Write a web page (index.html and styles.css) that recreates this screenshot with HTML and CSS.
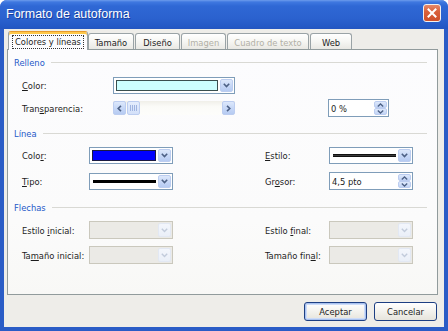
FILE: index.html
```html
<!DOCTYPE html>
<html lang="es">
<head>
<meta charset="utf-8">
<title>Formato de autoforma</title>
<link rel="stylesheet" href="styles.css">
</head>
<body>
<div class="window">
  <div class="titlebar">
    <span class="title">Formato de autoforma</span>
    <span class="close"><svg width="10" height="10" viewBox="0 0 10 10"><path d="M1.5 1.5 L8.5 8.5 M8.5 1.5 L1.5 8.5" stroke="#fff" stroke-width="2" stroke-linecap="square"/></svg></span>
  </div>
  <div class="client">
    <div class="tabs">
      <div class="tab active w-col"><span class="focus">Colores y líneas</span></div>
      <div class="tab w-tam">Tamaño</div>
      <div class="tab w-dis gap">Diseño</div>
      <div class="tab w-ima gap disabled">Imagen</div>
      <div class="tab w-cua gap disabled">Cuadro de texto</div>
      <div class="tab w-web gap">Web</div>
    </div>
    <div class="panel">
      <section class="group">
        <div class="group-head"><span>Relleno</span><i class="rule"></i></div>
        <div class="row fill-grid r1">
          <span class="lbl"><u>C</u>olor:</span>
          <div class="combo"><span class="field"><span class="swatch cyan"></span></span><span class="drop"><svg width="7" height="5" viewBox="0 0 7 5"><path d="M0.8 0.8 L3.5 3.5 L6.2 0.8" fill="none" stroke="#4d6185" stroke-width="1.6"/></svg></span></div>
        </div>
        <div class="row fill-grid r2">
          <span class="lbl">Tran<u>s</u>parencia:</span>
          <div class="scroll">
            <span class="sbtn"><svg width="5" height="7" viewBox="0 0 5 7"><path d="M4 0.8 L1.2 3.5 L4 6.2" fill="none" stroke="#4d6185" stroke-width="1.6"/></svg></span>
            <span class="thumb"><i></i><i></i><i></i><i></i></span>
            <span class="track"></span>
            <span class="sbtn"><svg width="5" height="7" viewBox="0 0 5 7"><path d="M1 0.8 L3.8 3.5 L1 6.2" fill="none" stroke="#4d6185" stroke-width="1.6"/></svg></span>
          </div>
          <span></span>
          <div class="spin"><span class="field text">0 %</span><span class="spin-btns"><span class="sb"><svg width="7" height="4" viewBox="0 0 7 4"><path d="M0.8 3.4 L3.5 0.9 L6.2 3.4" fill="none" stroke="#4d6185" stroke-width="1.3"/></svg></span><span class="sb"><svg width="7" height="4" viewBox="0 0 7 4"><path d="M0.8 0.6 L3.5 3.1 L6.2 0.6" fill="none" stroke="#4d6185" stroke-width="1.3"/></svg></span></span></div>
        </div>
      </section>

      <section class="group g2">
        <div class="group-head"><span>Línea</span><i class="rule"></i></div>
        <div class="row line-grid r3">
          <span class="lbl">Colo<u>r</u>:</span>
          <div class="combo"><span class="field"><span class="swatch blue"></span></span><span class="drop"><svg width="7" height="5" viewBox="0 0 7 5"><path d="M0.8 0.8 L3.5 3.5 L6.2 0.8" fill="none" stroke="#4d6185" stroke-width="1.6"/></svg></span></div>
          <span></span>
          <span class="lbl-r"><u>E</u>stilo:</span>
          <div class="combo"><span class="field"><span class="stroke style"></span></span><span class="drop"><svg width="7" height="5" viewBox="0 0 7 5"><path d="M0.8 0.8 L3.5 3.5 L6.2 0.8" fill="none" stroke="#4d6185" stroke-width="1.6"/></svg></span></div>
        </div>
        <div class="row line-grid r4">
          <span class="lbl"><u>T</u>ipo:</span>
          <div class="combo"><span class="field"><span class="stroke solid"></span></span><span class="drop"><svg width="7" height="5" viewBox="0 0 7 5"><path d="M0.8 0.8 L3.5 3.5 L6.2 0.8" fill="none" stroke="#4d6185" stroke-width="1.6"/></svg></span></div>
          <span></span>
          <span class="lbl-r">Gr<u>o</u>sor:</span>
          <div class="spin"><span class="field text">4,5 pto</span><span class="spin-btns"><span class="sb"><svg width="7" height="4" viewBox="0 0 7 4"><path d="M0.8 3.4 L3.5 0.9 L6.2 3.4" fill="none" stroke="#4d6185" stroke-width="1.3"/></svg></span><span class="sb"><svg width="7" height="4" viewBox="0 0 7 4"><path d="M0.8 0.6 L3.5 3.1 L6.2 0.6" fill="none" stroke="#4d6185" stroke-width="1.3"/></svg></span></span></div>
        </div>
      </section>

      <section class="group g3">
        <div class="group-head"><span>Flechas</span><i class="rule"></i></div>
        <div class="row line-grid r5">
          <span class="lbl">Estilo <u>i</u>nicial:</span>
          <div class="combo off"><span class="field"></span><span class="drop"><svg width="7" height="5" viewBox="0 0 7 5"><path d="M0.8 0.8 L3.5 3.5 L6.2 0.8" fill="none" stroke="#c2cbdb" stroke-width="1.4"/></svg></span></div>
          <span></span>
          <span class="lbl-r">Estilo <u>f</u>inal:</span>
          <div class="combo off"><span class="field"></span><span class="drop"><svg width="7" height="5" viewBox="0 0 7 5"><path d="M0.8 0.8 L3.5 3.5 L6.2 0.8" fill="none" stroke="#c2cbdb" stroke-width="1.4"/></svg></span></div>
        </div>
        <div class="row line-grid r6">
          <span class="lbl">Ta<u>m</u>año inicial:</span>
          <div class="combo off"><span class="field"></span><span class="drop"><svg width="7" height="5" viewBox="0 0 7 5"><path d="M0.8 0.8 L3.5 3.5 L6.2 0.8" fill="none" stroke="#c2cbdb" stroke-width="1.4"/></svg></span></div>
          <span></span>
          <span class="lbl-r">Tamaño fin<u>a</u>l:</span>
          <div class="combo off"><span class="field"></span><span class="drop"><svg width="7" height="5" viewBox="0 0 7 5"><path d="M0.8 0.8 L3.5 3.5 L6.2 0.8" fill="none" stroke="#c2cbdb" stroke-width="1.4"/></svg></span></div>
        </div>
      </section>
    </div>
    <div class="footer">
      <button class="btn default">Aceptar</button>
      <button class="btn">Cancelar</button>
    </div>
  </div>
</div>
</body>
</html>
```

FILE: styles.css
```css
* { box-sizing: border-box; }
html, body { margin: 0; padding: 0; }
body {
  width: 448px;
  height: 331px;
  overflow: hidden;
  background: #ffffff;
  font-family: "DejaVu Sans Condensed", "DejaVu Sans", sans-serif;
  font-stretch: condensed;
  font-size: 9.3px;
  color: #1c1c1c;
}
u { text-decoration: underline; text-underline-offset: 1px; }

.window {
  width: 448px;
  height: 331px;
  display: flex;
  flex-direction: column;
  background: #2a5cc6;
  border-radius: 7px 7px 0 0;
  overflow: hidden;
}

.titlebar {
  flex: none;
  height: 29px;
  display: flex;
  justify-content: space-between;
  align-items: flex-start;
  padding: 0 7px 0 6px;
  background: linear-gradient(to bottom, #6d9cec 0, #3f78e0 2px, #2f68d5 6px, #2b62cf 18px, #2459c6 26px, #2355c0 29px);
}
.title {
  margin-top: 7px;
  color: #fff;
  font-family: "Liberation Sans", sans-serif;
  font-stretch: normal;
  font-size: 12.5px;
  line-height: 15px;
  text-shadow: 1px 1px 0 #1a3f9e;
}
.close {
  margin-top: 4px;
  width: 18px;
  height: 18px;
  border: 1px solid #f4f0ee;
  border-radius: 3px;
  background: linear-gradient(to bottom, #e6896a 0, #d9613c 40%, #cd4f2a 100%);
  display: flex;
  align-items: center;
  justify-content: center;
}

.client {
  flex: 1;
  margin: 0 4px 4px;
  background: #eeede9;
  padding: 2px 6px 0 3px;
  display: flex;
  flex-direction: column;
}

.tabs {
  position: relative;
  z-index: 1;
  flex: none;
  display: flex;
  align-items: flex-end;
  height: 19px;
  margin-bottom: -1px;
  padding-left: 1px;
}
.tab {
  flex: none;
  height: 16px;
  margin-bottom: 1px;
  border: 1px solid #9aa3a6;
  border-bottom: 0;
  border-radius: 3px 3px 0 0;
  background: linear-gradient(to bottom, #ffffff 0, #f6f6f3 50%, #e9e8e3 100%);
  display: flex;
  align-items: center;
  justify-content: center;
  white-space: nowrap;
  padding-top: 1px;
}
.tab.gap { margin-left: 1px; }
.tab.disabled { color: #b2b0a6; }
.tab.active {
  height: 19px;
  margin-bottom: 0;
  border-top: 1px solid #e79a2e;
  box-shadow: inset 0 2px 0 #fec84a;
  background: #fcfcfe;
  padding-top: 1px;
}
.focus {
  border: 1px dotted #333;
  padding: 1px 2px 1px 2px;
  line-height: 10px;
}
.w-col { width: 80px; }
.w-tam { width: 46px; }
.w-dis { width: 45px; }
.w-ima { width: 45px; }
.w-cua { width: 82px; }
.w-web { width: 42px; }

.panel {
  flex: none;
  height: 246px;
  border: 1px solid #919b9c;
  background: linear-gradient(to bottom, #fcfcfe 0, #fbfbfb 70%, #f8f8f6 100%);
  padding: 5px 10px 0 6px;
}

.group-head {
  height: 14px;
  display: flex;
  align-items: center;
  gap: 6px;
  color: #2558c8;
}
.rule {
  flex: 1;
  height: 1px;
  background: #d9d9d4;
}
.g2 { margin-top: 10px; }
.g3 { margin-top: 11px; }

.row {
  display: grid;
  align-items: center;
  height: 17px;
}
.fill-grid { grid-template-columns: 99px 122px 93px 61px; }
.line-grid { grid-template-columns: 75px 84px 92px 64px 84px; }
.r1 { margin-top: 8px; }
.r2 { margin-top: 5px; }
.r3 { margin-top: 7px; }
.r4 { margin-top: 8px; }
.r5 { margin-top: 7px; }
.r6 { margin-top: 8px; }

.lbl { padding-left: 8px; white-space: nowrap; }
.lbl-r { white-space: nowrap; }

.combo {
  height: 17px;
  display: flex;
  border: 1px solid #7f9db9;
  background: #fff;
  padding: 1px;
}
.combo .field {
  flex: 1;
  display: flex;
  align-items: center;
  padding: 1px 2px 1px 1px;
}
.drop {
  flex: none;
  width: 13px;
  border: 1px solid #bccdf0;
  border-radius: 2px;
  background: linear-gradient(to bottom, #dde8fb 0, #c7d8f7 50%, #b6cbf2 100%);
  display: flex;
  align-items: center;
  justify-content: center;
}
.swatch {
  flex: 1;
  align-self: stretch;
  border: 1px solid #3a4f4f;
}
.swatch.cyan { background: #ccffff; }
.swatch.blue { background: #0000ff; border-color: #1a1a40; }
.stroke { flex: 1; margin-left: 1px; }
.stroke.solid { height: 3px; background: #000; }
.stroke.style { height: 3px; background: #3a3a3a; border-top: 1px solid #111; border-bottom: 1px solid #111; }

.combo.off {
  height: 18px;
  border-color: #cac8bd;
  background: #ebeae6;
}
.combo.off .drop {
  border-color: #e2e8f3;
  background: linear-gradient(to bottom, #f3f6fc 0, #eaeff8 100%);
}

.scroll {
  height: 14px;
  display: flex;
  background: linear-gradient(to bottom, #f0efe9 0, #fbfbf8 40%, #fdfdfb 100%);
}
.sbtn {
  flex: none;
  width: 13px;
  border: 1px solid #bccdf0;
  border-radius: 2px;
  background: linear-gradient(to bottom, #dde8fb 0, #c7d8f7 50%, #b6cbf2 100%);
  display: flex;
  align-items: center;
  justify-content: center;
}
.thumb {
  flex: none;
  width: 13px;
  margin-left: 1px;
  border: 1px solid #bccdf0;
  border-radius: 2px;
  background: linear-gradient(to bottom, #e4edfc 0, #d3e0f9 100%);
  display: flex;
  align-items: center;
  justify-content: center;
  gap: 1px;
}
.thumb i {
  width: 1px;
  height: 6px;
  background: #9fb4e0;
}
.track { flex: 1; }

.spin {
  height: 18px;
  display: flex;
  border: 1px solid #7f9db9;
  background: #fff;
  padding: 1px;
}
.spin .field {
  flex: 1;
  display: flex;
  align-items: center;
  padding-left: 1px;
}
.spin-btns {
  flex: none;
  width: 13px;
  display: flex;
  flex-direction: column;
  gap: 0;
}
.sb {
  flex: 1;
  border: 1px solid #bccdf0;
  border-radius: 2px;
  background: linear-gradient(to bottom, #dde8fb 0, #c2d4f5 100%);
  display: flex;
  align-items: center;
  justify-content: center;
}

.footer {
  flex: none;
  display: flex;
  justify-content: flex-end;
  gap: 7px;
  margin-top: 7px;
  padding-right: 1px;
}
.btn {
  width: 63px;
  height: 19px;
  padding: 0;
  border: 1px solid #1d3f83;
  border-radius: 3px;
  background: linear-gradient(to bottom, #ffffff 0, #f6f5f1 40%, #e6e4dc 100%);
  font-family: inherit;
  font-stretch: condensed;
  font-size: 9.3px;
  color: #1c1c1c;
}
.btn.default {
  box-shadow: inset 0 0 0 1px #a9c2ef, inset 0 0 0 2px #cddcf8;
}
```
